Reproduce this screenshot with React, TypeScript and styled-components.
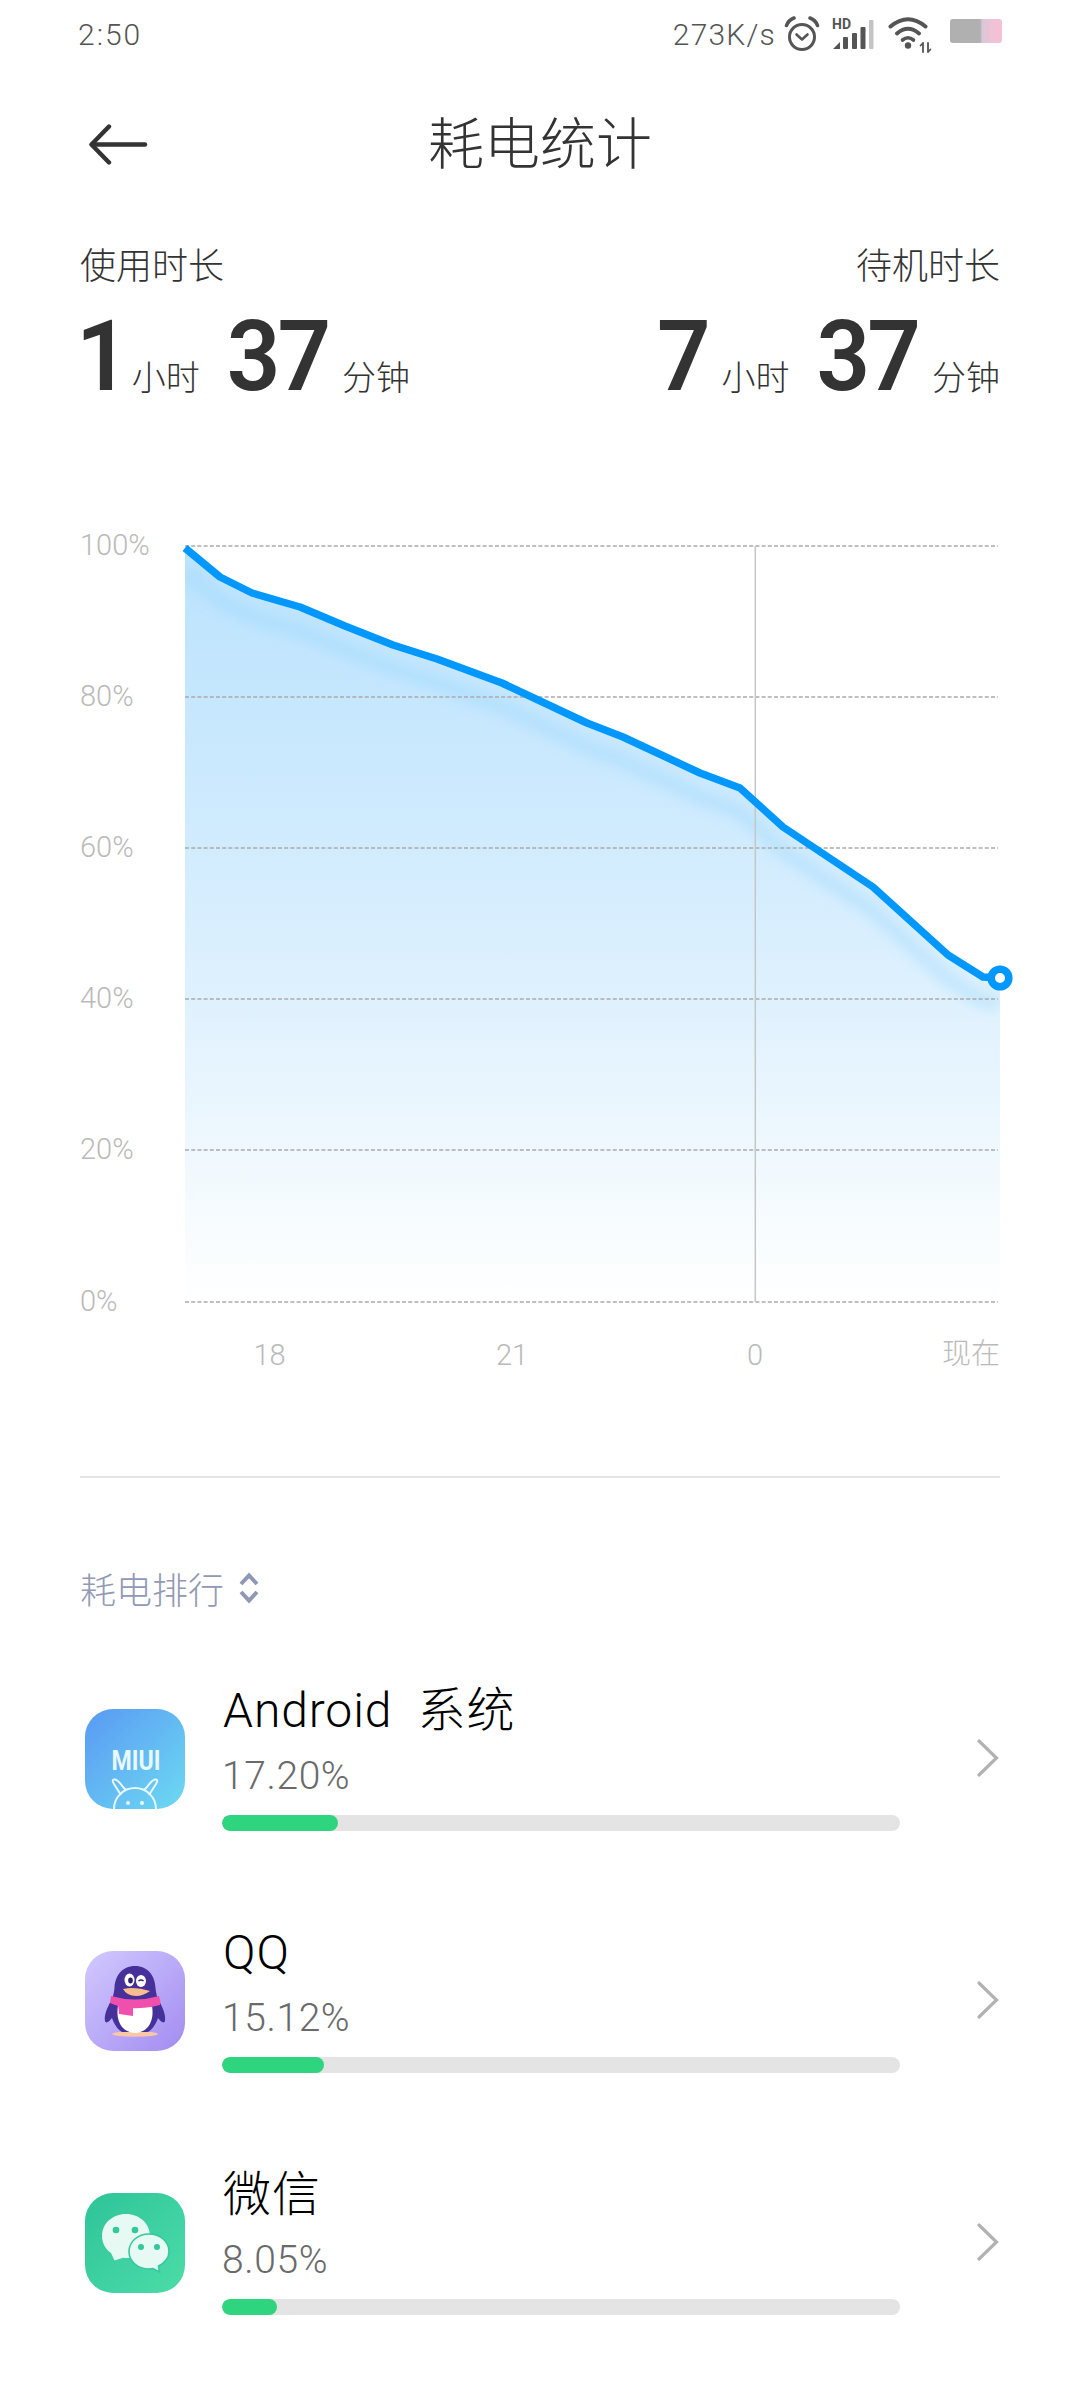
import React from "react";
import styled, { createGlobalStyle } from "styled-components";

const FONT = `Roboto, "Noto Sans CJK SC", sans-serif`;

const Global = createGlobalStyle`
  html, body { margin: 0; padding: 0; background: #fff; }
  body { font-family: ${FONT}; font-weight: 300; overflow: hidden; }
  * { box-sizing: border-box; }
`;

const Page = styled.div`
  width: 1080px;
  height: 2400px;
  background: #fff;
  overflow: hidden;
`;

const StatusBar = styled.div`
  height: 68px;
  padding: 0 78px 0 78px;
  display: flex;
  align-items: center;
  justify-content: space-between;
  color: #555;
`;
const StatusTime = styled.span`
  font-size: 30px;
  font-weight: 300;
  letter-spacing: 2px;
`;
const StatusRight = styled.div`
  display: flex;
  align-items: center;
`;
const NetSpeed = styled.span`
  font-size: 30px;
  font-weight: 300;
  letter-spacing: 1.2px;
  margin-right: 6px;
`;
const StatusIcon = styled.svg<{ $gap?: number }>`
  display: block;
  flex: none;
  margin-left: ${(p) => p.$gap || 0}px;
`;
const HdText = styled.text`
  font-family: Roboto, sans-serif;
  font-size: 14px;
  font-weight: 700;
  fill: #555;
`;
const Battery = styled.div`
  width: 52px;
  height: 24px;
  margin-left: 18px;
  border-radius: 3px;
  margin-top: -6px;
  background: linear-gradient(90deg, #b0b0b0 0, #b0b0b0 58%, #d8c8d8 62%, #f5c0d6 85%, #f5c0d6 100%);
`;

const Header = styled.header`
  height: 150px;
  padding: 4px 89px 0 89px;
  display: grid;
  grid-template-columns: 1fr auto 1fr;
  align-items: center;
`;
const BackIcon = styled.svg`
  display: block;
`;
const Title = styled.h1`
  margin: 0;
  font-size: 56px;
  font-weight: 300;
  color: #333;
  line-height: 1;
`;

const Stats = styled.section`
  padding: 26px 80px 0;
  display: flex;
  justify-content: space-between;
  height: 282px;
`;
const StatBlock = styled.div<{ $right?: boolean }>`
  display: flex;
  flex-direction: column;
  align-items: ${(p) => (p.$right ? "flex-end" : "flex-start")};
`;
const StatLabel = styled.div`
  font-size: 36px;
  line-height: 46px;
  color: #333;
`;
const StatValue = styled.div`
  display: flex;
  align-items: baseline;
  margin-top: 26px;
  height: 84px;
`;
const Digits = styled.span<{ $narrow?: boolean }>`
  display: inline-block;
  font-family: Roboto, sans-serif;
  font-size: 94px;
  font-weight: 600;
  line-height: 84px;
  color: #333;
  letter-spacing: -3px;
  transform: scaleY(1.04);
  transform-origin: 50% 100%;
  margin-left: ${(p) => (p.$narrow ? "-4px" : "0")};
  margin-right: ${(p) => (p.$narrow ? "-9px" : "0")};
`;
const Unit = styled.span`
  font-size: 34px;
  color: #333;
  margin: 0 27px 0 14px;
  &:last-child { margin-right: 0; }
`;

const ChartSvg = styled.svg`
  display: block;
  width: 1080px;
  height: 900px;
`;
const AxisText = styled.text<{ $anchor?: string }>`
  font-family: ${FONT};
  font-size: 29px;
  font-weight: 300;
  fill: #bababa;
  text-anchor: ${(p) => p.$anchor || "start"};
`;

const Divider = styled.hr`
  margin: 76px 80px 0;
  height: 2px;
  border: 0;
  background: #e4e4e4;
`;

const RankHead = styled.div`
  margin: 88px 0 0 80px;
  height: 44px;
  display: flex;
  align-items: center;
  gap: 14px;
  font-size: 36px;
  color: #9299b6;
`;

const List = styled.div`
  margin-top: 78px;
`;
const Row = styled.div`
  height: 242px;
  padding-left: 85px;
  display: flex;
  align-items: flex-start;
`;
const AppIcon = styled.svg`
  display: block;
  flex: none;
  width: 100px;
  height: 100px;
  margin-top: 21px;
  margin-right: 37px;
`;
const IconLabel = styled.text`
  font-family: Roboto, sans-serif;
  font-size: 28px;
  font-weight: 700;
  fill: #e9f8fd;
  text-anchor: middle;
`;
const RowBody = styled.div`
  width: 678px;
  flex: none;
`;
const AppName = styled.div`
  margin-top: -6px;
  padding-left: 1px;
  font-size: 48px;
  line-height: 58px;
  height: 58px;
  color: #000;
  white-space: pre;
  letter-spacing: 0.9px;
`;
const AppPercent = styled.div`
  margin-top: 8px;
  font-size: 39px;
  line-height: 56px;
  height: 56px;
  color: #6a6a6a;
  letter-spacing: 0.6px;
`;
const Track = styled.div`
  margin-top: 11px;
  height: 16px;
  border-radius: 8px;
  background: #e4e4e4;
  overflow: hidden;
`;
const Fill = styled.div`
  height: 100%;
  border-radius: 8px;
  background: #2fd47e;
`;
const RowChevron = styled.svg`
  display: block;
  flex: none;
  margin: 51px 0 0 77px;
`;

const curve: [number, number][] = [
  [185, 548], [220, 577], [252, 593], [300, 607], [345, 626], [393, 645], [437, 659],
  [502, 683], [587, 723], [623, 737], [700, 773], [740, 788], [783, 827], [873, 887],
  [948, 955], [983, 977], [1000, 978],
];
const linePoints = curve.map((p) => p.join(",")).join(" ");
const areaPoints = `${linePoints} 1000,1302 185,1302`;
const grid = [
  { label: "100%", y: 546 },
  { label: "80%", y: 697 },
  { label: "60%", y: 848 },
  { label: "40%", y: 999 },
  { label: "20%", y: 1150 },
  { label: "0%", y: 1302 },
];

const Chart = () => (
  <ChartSvg viewBox="0 500 1080 900">
    <defs>
      <linearGradient id="area" x1="0" y1="546" x2="0" y2="1302" gradientUnits="userSpaceOnUse">
        <stop offset="0" stopColor="#bbe3fd" />
        <stop offset="0.3" stopColor="#cbe9fe" />
        <stop offset="0.6" stopColor="#dff1fe" />
        <stop offset="0.85" stopColor="#f3fafe" />
        <stop offset="1" stopColor="#ffffff" />
      </linearGradient>
      <clipPath id="areaClip">
        <polygon points={areaPoints} />
      </clipPath>
      <filter id="soft" x="-5%" y="-5%" width="110%" height="110%">
        <feGaussianBlur stdDeviation="6" />
      </filter>
    </defs>
    <polygon points={areaPoints} fill="url(#area)" />
    <g clipPath="url(#areaClip)">
      <polyline
        points={linePoints}
        fill="none"
        stroke="#8fd2fd"
        strokeOpacity="0.32"
        strokeWidth="16"
        filter="url(#soft)"
        transform="translate(0 24)"
      />
    </g>
    {grid.map((g) => (
      <line key={g.label} x1="185" x2="998" y1={g.y} y2={g.y} stroke="#ababab" strokeWidth="1.3" strokeDasharray="4 2.2" />
    ))}
    <line x1="755.3" x2="755.3" y1="546" y2="1302" stroke="#c6c6c6" strokeWidth="1.5" />
    <polyline points={linePoints} fill="none" stroke="#0098ff" strokeWidth="7.5" strokeLinejoin="round" />
    <circle cx="1000" cy="978" r="8.8" fill="#fff" stroke="#0098ff" strokeWidth="7.6" />
    {grid.map((g) => (
      <AxisText key={g.label} x="80" y={g.y + 9}>{g.label}</AxisText>
    ))}
    <AxisText x="269.5" y="1365" $anchor="middle">18</AxisText>
    <AxisText x="512" y="1365" $anchor="middle">21</AxisText>
    <AxisText x="755" y="1365" $anchor="middle">0</AxisText>
    <AxisText x="1000" y="1364" $anchor="end">现在</AxisText>
  </ChartSvg>
);

const AlarmIcon = () => (
  <StatusIcon $gap={2} width="38" height="38" viewBox="0 0 38 38" fill="none" stroke="#555">
    <circle cx="18" cy="22" r="12.5" strokeWidth="3" />
    <path d="M12.5 19.5 L18 24.5 L23.5 19.5" strokeWidth="2.6" strokeLinecap="round" strokeLinejoin="round" />
    <path d="M2.5 10.5 Q4.5 5 10 3" strokeWidth="3.6" strokeLinecap="round" />
    <path d="M33.5 10.5 Q31.5 5 26 3" strokeWidth="3.6" strokeLinecap="round" />
  </StatusIcon>
);

const SignalIcon = () => (
  <StatusIcon $gap={10} width="42" height="36" viewBox="0 0 42 36">
    <HdText x="0" y="13">HD</HdText>
    <path d="M1 33 L8 26 L8 33 Z" fill="#555" />
    <rect x="11" y="21" width="5" height="12" rx="1" fill="#555" />
    <rect x="20" y="17" width="5" height="16" rx="1" fill="#555" />
    <rect x="28.5" y="11" width="5" height="22" rx="1" fill="#555" />
    <rect x="37" y="4" width="4.5" height="29" rx="1" fill="#c4c4c4" />
  </StatusIcon>
);

const WifiIcon = () => (
  <StatusIcon $gap={14} width="44" height="38" viewBox="0 0 44 38" fill="none" stroke="#555" strokeLinecap="round">
    <path d="M2.5 11.5 Q20 -3 37.5 11.5" strokeWidth="4" />
    <path d="M9 18.5 Q20 9 31 18.5" strokeWidth="4" />
    <path d="M14.5 25 Q20 20.5 25.5 25" strokeWidth="3.6" />
    <circle cx="20" cy="30.5" r="3.2" fill="#555" stroke="none" />
    <path d="M35 28 L35 37 M32.6 30.5 L35 28" strokeWidth="1.8" />
    <path d="M40 28 L40 37 M42.4 34.5 L40 37" strokeWidth="1.8" />
  </StatusIcon>
);

const UpDown = () => (
  <svg width="22" height="32" viewBox="0 0 22 32" fill="none" stroke="#8f97b5" strokeWidth="4" strokeLinejoin="miter">
    <path d="M3 12 L11 3.5 L19 12" />
    <path d="M3 20 L11 28.5 L19 20" />
  </svg>
);

const MiuiIcon = () => (
  <AppIcon viewBox="0 0 100 100">
    <defs>
      <linearGradient id="miui" x1="0" y1="0" x2="1" y2="1">
        <stop offset="0" stopColor="#5a99f3" />
        <stop offset="1" stopColor="#6cdaf2" />
      </linearGradient>
      <clipPath id="miuiClip"><rect width="100" height="100" rx="28" /></clipPath>
    </defs>
    <rect width="100" height="100" rx="28" fill="url(#miui)" />
    <IconLabel x="51" y="61" textLength="49" lengthAdjust="spacingAndGlyphs">MIUI</IconLabel>
    <g clipPath="url(#miuiClip)" fill="none" stroke="#e9f8fd" strokeWidth="2">
      <circle cx="50" cy="100" r="21" />
      <path d="M36 86 L29 75 Q26 70 30 70.5 Q33 71 38 78 L41 81" />
      <path d="M64 86 L71 75 Q74 70 70 70.5 Q67 71 62 78 L59 81" />
      <circle cx="43" cy="94" r="2" fill="#e9f8fd" stroke="none" />
      <circle cx="57" cy="94" r="2" fill="#e9f8fd" stroke="none" />
    </g>
  </AppIcon>
);

const QqIcon = () => (
  <AppIcon viewBox="0 0 100 100">
    <defs>
      <linearGradient id="qq" x1="0" y1="0" x2="1" y2="1">
        <stop offset="0" stopColor="#d2c9ff" />
        <stop offset="1" stopColor="#a28cf0" />
      </linearGradient>
    </defs>
    <rect width="100" height="100" rx="28" fill="url(#qq)" />
    <ellipse cx="50" cy="83" rx="23" ry="2.8" fill="#f9c6a6" />
    <path d="M50 15 C37 15 30 25 29.5 37 C29 42 28 46 26 50 C22 57 19 64 20 70 C21 73 24 71 27 67 C29 73 33 79 37 81 L63 81 C67 79 71 73 73 67 C76 71 79 73 80 70 C81 64 78 57 74 50 C72 46 71 42 70.5 37 C70 25 63 15 50 15 Z" fill="#46309a" />
    <path d="M33 55 L67 55 C69 66 66 81 50 82 C34 81 31 66 33 55 Z" fill="#fff" />
    <path d="M26 45 Q50 52 74 45 Q76 50 75 54 Q50 60 33 55 Q27 53 25 52 Z" fill="#f04fae" />
    <path d="M33 53 L48 56 L48 65 L34 63 Z" fill="#f04fae" />
    <ellipse cx="44.5" cy="29" rx="5" ry="6.5" fill="#fff" />
    <ellipse cx="56" cy="30" rx="5" ry="6" fill="#fff" />
    <ellipse cx="45.5" cy="29.5" rx="2.3" ry="3" fill="#2d1e70" />
    <path d="M53.5 30 Q56 28 58.5 30" fill="none" stroke="#2d1e70" strokeWidth="1.5" />
    <path d="M38 38 Q50 35 65 40 Q58 45 51 45 Q42 45 38 38 Z" fill="#fbbd8e" />
  </AppIcon>
);

const WeChatIcon = () => (
  <AppIcon viewBox="0 0 100 100">
    <defs>
      <linearGradient id="wx" x1="0" y1="0" x2="1" y2="1">
        <stop offset="0" stopColor="#2ec498" />
        <stop offset="1" stopColor="#4cdca9" />
      </linearGradient>
    </defs>
    <rect width="100" height="100" rx="28" fill="url(#wx)" />
    <path d="M41 21 C27.5 21 17 30.5 17 43 C17 50 20.5 56 26 60 L29.5 67.5 L38 64.8 Q39.5 65 41 65 C54.5 65 65 55.5 65 43 C65 30.5 54.5 21 41 21 Z" fill="#e6f9f2" />
    <path d="M64 41 C53 41 44 48.5 44 58.5 C44 68.5 53 76 64 76 Q66 76 68 75.6 L74.5 79 L73.5 73 C79.5 70 84 64.5 84 58.5 C84 48.5 75 41 64 41 Z" fill="#e6f9f2" stroke="#36c99d" strokeWidth="1.6" />
    <circle cx="31" cy="37" r="3.3" fill="#30c99a" />
    <circle cx="50" cy="37" r="3.3" fill="#30c99a" />
    <circle cx="56" cy="54" r="3" fill="#30c99a" />
    <circle cx="72" cy="54" r="3" fill="#30c99a" />
  </AppIcon>
);

const Chevron = () => (
  <RowChevron width="22" height="38" viewBox="0 0 22 38" fill="none" stroke="#b2b2b2" strokeWidth="3.2" strokeLinecap="round" strokeLinejoin="miter">
    <path d="M2 2 L19.5 19 L2 36" />
  </RowChevron>
);

const apps = [
  { name: "Android  系统", percent: "17.20%", bar: 116, icon: <MiuiIcon /> },
  { name: "QQ", percent: "15.12%", bar: 102, icon: <QqIcon /> },
  { name: "微信", percent: "8.05%", bar: 55, icon: <WeChatIcon /> },
];

export default function App() {
  return (
    <Page>
      <Global />
      <StatusBar>
        <StatusTime>2:50</StatusTime>
        <StatusRight>
          <NetSpeed>273K/s</NetSpeed>
          <AlarmIcon />
          <SignalIcon />
          <WifiIcon />
          <Battery />
        </StatusRight>
      </StatusBar>
      <Header>
        <BackIcon width="60" height="42" viewBox="0 0 60 42" fill="none" stroke="#333" strokeWidth="4.4" strokeLinecap="round" strokeLinejoin="round">
          <path d="M20 2.5 L2.5 20.5 L20 38.5" />
          <path d="M3 20.5 L56 20.5" />
        </BackIcon>
        <Title>耗电统计</Title>
        <span />
      </Header>
      <Stats>
        <StatBlock>
          <StatLabel>使用时长</StatLabel>
          <StatValue>
            <Digits $narrow>1</Digits>
            <Unit>小时</Unit>
            <Digits>37</Digits>
            <Unit>分钟</Unit>
          </StatValue>
        </StatBlock>
        <StatBlock $right>
          <StatLabel>待机时长</StatLabel>
          <StatValue>
            <Digits>7</Digits>
            <Unit>小时</Unit>
            <Digits>37</Digits>
            <Unit>分钟</Unit>
          </StatValue>
        </StatBlock>
      </Stats>
      <Chart />
      <Divider />
      <RankHead>
        耗电排行
        <UpDown />
      </RankHead>
      <List>
        {apps.map((a) => (
          <Row key={a.percent}>
            {a.icon}
            <RowBody>
              <AppName>{a.name}</AppName>
              <AppPercent>{a.percent}</AppPercent>
              <Track>
                <Fill style={{ width: a.bar }} />
              </Track>
            </RowBody>
            <Chevron />
          </Row>
        ))}
      </List>
    </Page>
  );
}
